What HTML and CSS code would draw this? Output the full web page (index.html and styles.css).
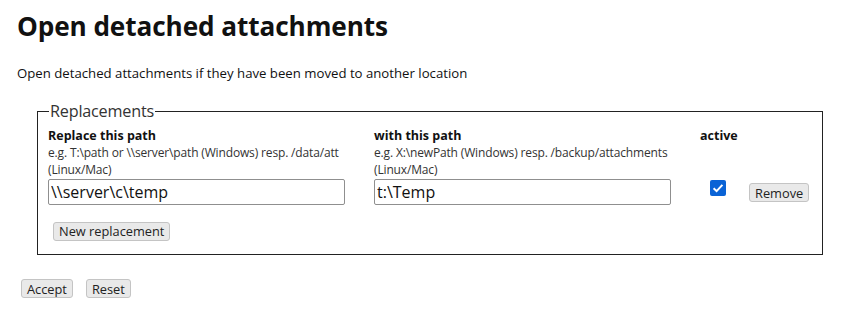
FILE: index.html
```html
<!DOCTYPE html>
<html>
<head>
<meta charset="utf-8">
<link rel="stylesheet" href="styles.css">
</head>
<body>
<div class="page">
  <h1 class="title">Open detached attachments</h1>
  <p class="intro">Open detached attachments if they have been moved to another location</p>
  <fieldset class="group">
    <legend class="legend">Replacements</legend>
    <div class="grid">
      <div class="head">
        <div class="label">Replace this path</div>
        <div class="hint"><span class="line">e.g. T:\path or \\server\path (Windows) resp. /data/att</span><span class="line">(Linux/Mac)</span></div>
      </div>
      <div class="head">
        <div class="label">with this path</div>
        <div class="hint"><span class="line">e.g. X:\newPath (Windows) resp. /backup/attachments</span><span class="line">(Linux/Mac)</span></div>
      </div>
      <div class="head">
        <div class="label">active</div>
      </div>
      <div class="head"></div>
      <div class="cell"><input class="field" type="text" value="\\server\c\temp"></div>
      <div class="cell"><input class="field" type="text" value="t:\Temp"></div>
      <div class="cell center"><span class="check"><svg width="16" height="16" viewBox="0 0 16 16"><rect x="0" y="0" width="16" height="16" rx="2" fill="#0a63d6"/><path d="M3.6 8.2 L6.6 11.1 L12.4 4.9" fill="none" stroke="#fff" stroke-width="2"/></svg></span></div>
      <div class="cell"><button class="btn remove">Remove</button></div>
    </div>
    <div class="addrow"><button class="btn">New replacement</button></div>
  </fieldset>
  <div class="actions">
    <button class="btn">Accept</button>
    <button class="btn">Reset</button>
  </div>
</div>
</body>
</html>
```

FILE: styles.css
```css
html, body {
  margin: 0;
  padding: 0;
  background: #fff;
}
body {
  font-family: "Open Sans", "Noto Sans", sans-serif;
  color: #111;
}
.page {
  padding: 8px 0 0 17px;
}
.title {
  font-size: 26.2px;
  font-weight: 700;
  margin: 0;
  line-height: 36px;
  color: #111;
  letter-spacing: -0.1px;
}
.intro {
  font-size: 13.2px;
  margin: 20px 0 0 0;
  line-height: 18px;
}
.group {
  margin: 20px 0 0 20px;
  width: 786px;
  box-sizing: border-box;
  border: 1px solid #222;
  padding: 0 10px 13px 10px;
}
.legend {
  font-size: 16.2px;
  color: #333;
  padding: 0 1px;
  margin-left: 1px;
  line-height: 18px;
  letter-spacing: -0.2px;
}
.grid {
  display: grid;
  grid-template-columns: 326px 326px 49px auto;
  align-items: center;
}
.head {
  align-self: start;
  padding-top: 7px;
}
.label {
  font-size: 12.5px;
  font-weight: 700;
  line-height: 17px;
  color: #111;
}
.hint {
  font-size: 12px;
  line-height: 17px;
  color: #333;
  letter-spacing: -0.15px;
}
.line {
  display: block;
  white-space: nowrap;
}
.cell {
  height: 28px;
  display: flex;
  align-items: center;
}
.center {
  justify-content: flex-start;
  padding-left: 10px;
}
.check {
  display: inline-flex;
  margin-top: -8px;
}
.field {
  width: 297px;
  height: 26px;
  box-sizing: border-box;
  border: 1px solid #8f8f8f;
  border-radius: 2px;
  font-family: "Open Sans", "Noto Sans", sans-serif;
  font-size: 16px;
  padding: 0 2px;
  color: #111;
  margin: 0;
}
.btn {
  font-family: "Open Sans", "Noto Sans", sans-serif;
  font-size: 12.8px;
  line-height: 16px;
  padding: 0 5px;
  height: 19px;
  background: #e9e9e9;
  border: 1px solid #c4c4c4;
  border-radius: 3px;
  color: #222;
  margin: 0;
}
.remove {
  margin-top: 1px;
}
.addrow {
  padding: 13px 0 0 5px;
}
.actions {
  display: flex;
  gap: 13px;
  margin: 24px 0 0 4px;
}
```
